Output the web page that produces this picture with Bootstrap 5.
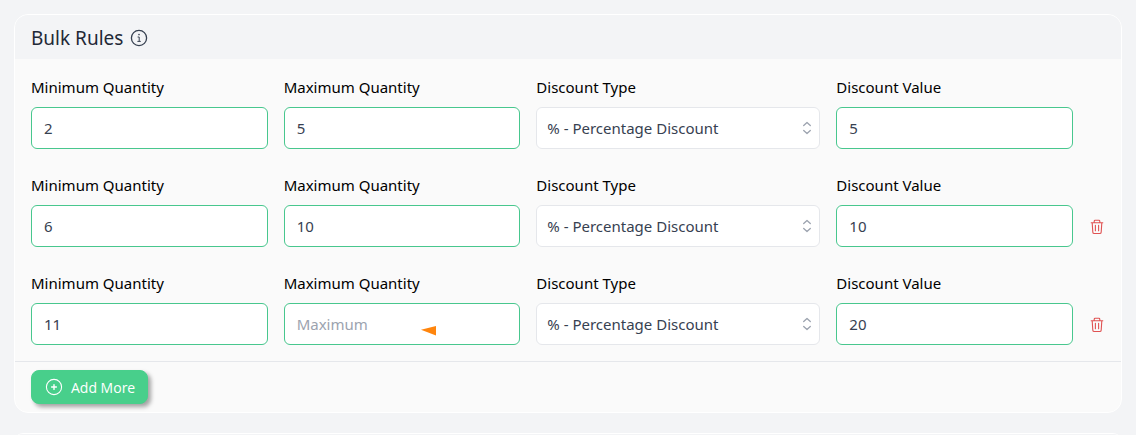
<!DOCTYPE html>
<html lang="en">
<head>
<meta charset="utf-8">
<meta name="viewport" content="width=device-width, initial-scale=1">
<title>Bulk Rules</title>
<link href="https://cdn.jsdelivr.net/npm/bootstrap@5.3.0/dist/css/bootstrap.min.css" rel="stylesheet">
<style>
  body { background: #f3f4f6; font-family: "Noto Sans", "Open Sans", sans-serif; font-size: 15px; line-height: 24px; color: #000; overflow: hidden; }
  .page { padding: 14px 14px 0; }
  .panel { --bs-card-bg: #fafafa; border: 1px solid #fff; border-radius: 14px; overflow: hidden; }
  .panel + .panel { margin-top: 20px; }
  .panel-head { background: #f3f4f6; color: #1f2937; padding: 9px 16px 7px; gap: 7px; }
  .panel-head h2 { font-size: 19px; line-height: 28px; font-weight: 400; }
  .rules { padding: 16px; display: grid; gap: 24px; }
  .rule { display: grid; grid-template-columns: 5fr 5fr 6fr 5fr 16px; gap: 16px; align-items: end; }
  .rule .form-label { display: block; margin-bottom: 8px; }
  .rule .form-control, .rule .form-select { height: 42px; border-radius: 6px; font-size: 15px; color: #374151; background-color: #fff; padding: 8px 12px; }
  .rule .form-control { border-color: #48c78e; }
  .rule .form-control::placeholder { color: #9ca3af; }
  .rule .form-select { border-color: #e5e7eb; padding: 8px 32px 8px 10px; background-position: right 2px center; background-size: 20px 20px;
    background-image: url("data:image/svg+xml,%3Csvg xmlns='http://www.w3.org/2000/svg' viewBox='0 0 20 20' fill='none' stroke='%239ca3af' stroke-width='1.3' stroke-linecap='round' stroke-linejoin='round'%3E%3Cpath d='M6.7 7.5 10 4.5l3.3 3M6.7 12.5l3.3 3 3.3-3'/%3E%3C/svg%3E"); }
  .remove { height: 42px; padding: 2px 0 0; color: #e05252; }
  .marker { left: 137px; top: 23px; }
  .panel-foot { border-top: 1px solid #e5e7eb; padding: 8px 16px; }
  .add { --bs-btn-color: #fff; --bs-btn-bg: #48cf8b; --bs-btn-border-color: #48cf8b; --bs-btn-hover-color: #fff; --bs-btn-hover-bg: #3dbd7d; --bs-btn-hover-border-color: #3dbd7d;
    height: 34px; padding: 0 12px 0 13px; font-family: "Open Sans", "Noto Sans", sans-serif; font-size: 14px; border-radius: 8px; box-shadow: 3px 3px 4px rgba(0,0,0,.35); }
</style>
</head>
<body>
<main class="page">
  <section class="card panel">
    <header class="panel-head d-flex align-items-center">
      <h2 class="m-0">Bulk Rules</h2>
      <svg width="18" height="18" viewBox="0 0 18 18" fill="none" stroke="#374151" role="img" aria-label="Info"><circle cx="9" cy="9" r="7.6" stroke-width="1.3"/><path d="M7.6 8h1.6v4.3M7.4 12.4h3.4" stroke-width="1"/><circle cx="9" cy="5.6" r=".8" fill="#374151" stroke="none"/></svg>
    </header>
    <div class="rules">
      <div class="rule">
        <div><label class="form-label" for="min1">Minimum Quantity</label><input class="form-control" id="min1" type="text" value="2"></div>
        <div><label class="form-label" for="max1">Maximum Quantity</label><input class="form-control" id="max1" type="text" value="5"></div>
        <div><label class="form-label" for="type1">Discount Type</label><select class="form-select" id="type1"><option>% - Percentage Discount</option></select></div>
        <div><label class="form-label" for="val1">Discount Value</label><input class="form-control" id="val1" type="text" value="5"></div>
      </div>
      <div class="rule">
        <div><label class="form-label" for="min2">Minimum Quantity</label><input class="form-control" id="min2" type="text" value="6"></div>
        <div><label class="form-label" for="max2">Maximum Quantity</label><input class="form-control" id="max2" type="text" value="10"></div>
        <div><label class="form-label" for="type2">Discount Type</label><select class="form-select" id="type2"><option>% - Percentage Discount</option></select></div>
        <div><label class="form-label" for="val2">Discount Value</label><input class="form-control" id="val2" type="text" value="10"></div>
        <button class="btn remove border-0 d-flex align-items-center justify-content-center" type="button" aria-label="Remove rule"><svg width="14" height="16" viewBox="0 0 14 16" fill="none" stroke="currentColor" stroke-width="1.1" stroke-linecap="round" stroke-linejoin="round"><path d="M1.2 3.7h11.6M4.2 3.5V2.2q0-.9.9-.9h3.8q.9 0 .9.9v1.3M2.2 3.9l.6 9.2q.1 1.4 1.4 1.4h5.6q1.3 0 1.4-1.4l.6-9.2M5.4 6.3v5.5M8.6 6.3v5.5"/></svg></button>
      </div>
      <div class="rule">
        <div><label class="form-label" for="min3">Minimum Quantity</label><input class="form-control" id="min3" type="text" value="11"></div>
        <div><label class="form-label" for="max3">Maximum Quantity</label><div class="position-relative"><input class="form-control" id="max3" type="text" placeholder="Maximum"><svg class="marker position-absolute" width="15" height="10" viewBox="0 0 15 10" fill="#ff850d" aria-hidden="true"><path d="M0 3.8 15 0v9.4z"/></svg></div></div>
        <div><label class="form-label" for="type3">Discount Type</label><select class="form-select" id="type3"><option>% - Percentage Discount</option></select></div>
        <div><label class="form-label" for="val3">Discount Value</label><input class="form-control" id="val3" type="text" value="20"></div>
        <button class="btn remove border-0 d-flex align-items-center justify-content-center" type="button" aria-label="Remove rule"><svg width="14" height="16" viewBox="0 0 14 16" fill="none" stroke="currentColor" stroke-width="1.1" stroke-linecap="round" stroke-linejoin="round"><path d="M1.2 3.7h11.6M4.2 3.5V2.2q0-.9.9-.9h3.8q.9 0 .9.9v1.3M2.2 3.9l.6 9.2q.1 1.4 1.4 1.4h5.6q1.3 0 1.4-1.4l.6-9.2M5.4 6.3v5.5M8.6 6.3v5.5"/></svg></button>
      </div>
    </div>
    <footer class="panel-foot">
      <button class="btn add d-inline-flex align-items-center gap-2" type="button"><svg width="18" height="18" viewBox="0 0 18 18" fill="none" stroke="#fff" stroke-width="1.1" stroke-linecap="round" aria-hidden="true"><circle cx="9" cy="9" r="7.6"/><path d="M9 6.6v4.8M6.6 9h4.8" stroke-width="1.4"/></svg>Add More</button>
    </footer>
  </section>
  <section class="card panel"><div class="panel-head"></div></section>
</main>
<script src="https://cdn.jsdelivr.net/npm/bootstrap@5.3.0/dist/js/bootstrap.bundle.min.js"></script>
</body>
</html>
